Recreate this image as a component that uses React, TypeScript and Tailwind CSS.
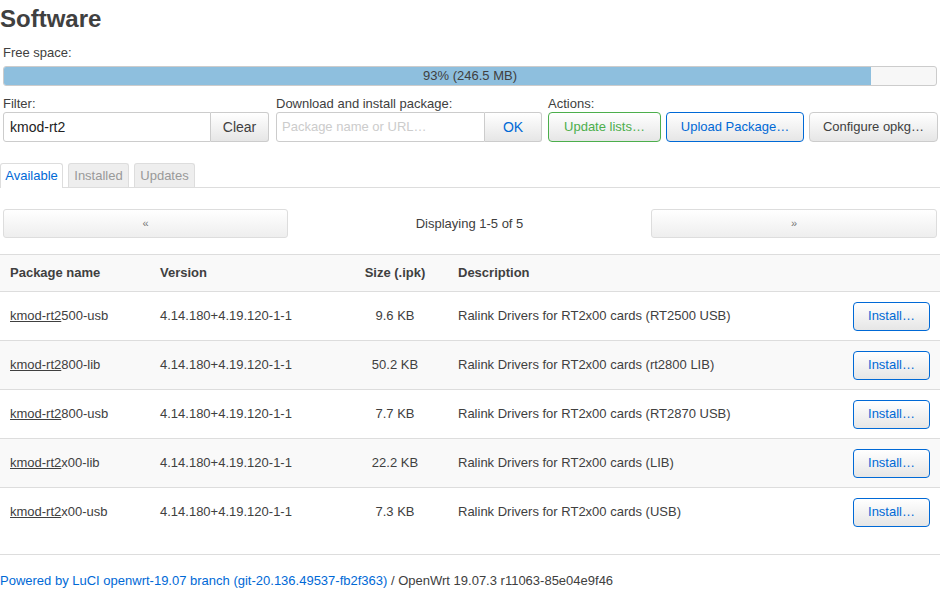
import React from "react";

const packages = [
  { rest: "500-usb", version: "4.14.180+4.19.120-1-1", size: "9.6 KB", desc: "Ralink Drivers for RT2x00 cards (RT2500 USB)" },
  { rest: "800-lib", version: "4.14.180+4.19.120-1-1", size: "50.2 KB", desc: "Ralink Drivers for RT2x00 cards (rt2800 LIB)" },
  { rest: "800-usb", version: "4.14.180+4.19.120-1-1", size: "7.7 KB", desc: "Ralink Drivers for RT2x00 cards (RT2870 USB)" },
  { rest: "x00-lib", version: "4.14.180+4.19.120-1-1", size: "22.2 KB", desc: "Ralink Drivers for RT2x00 cards (LIB)" },
  { rest: "x00-usb", version: "4.14.180+4.19.120-1-1", size: "7.3 KB", desc: "Ralink Drivers for RT2x00 cards (USB)" },
];

export default function App() {
  return (
    <div className="w-[940px] h-[590px] bg-white text-[#404040] text-[13px] font-['Liberation_Sans',Arial,sans-serif] overflow-hidden">
      {/* Title */}
      <h2 className="pt-[5px] h-[33px] text-[24px] leading-[28px] font-bold">Software</h2>

      {/* Free space */}
      <div className="mt-[11px] px-[3px]">
        <div className="leading-[18px]">Free space:</div>
        <div className="relative mt-[4px] h-[20px] border border-[#ccc] rounded-[3px] bg-[#f7f7f7] overflow-hidden">
          <div className="h-full bg-[#8ebfde]" style={{ width: "93%" }}></div>
          <div className="absolute inset-0 flex items-center justify-center text-[13px] text-[#404040]">
            93% (246.5 MB)
          </div>
        </div>
      </div>

      {/* Controls */}
      <div className="flex mt-[9px] px-[3px]">
        <div className="w-[266px]">
          <div className="leading-[17px]">Filter:</div>
          <div className="flex h-[30px]">
            <div className="w-[208px] border border-[#ccc] rounded-l-[3px] flex items-center px-[6px] text-[14px] text-[#222]">
              kmod-rt2
            </div>
            <button className="w-[58px] border border-l-0 border-[#ccc] rounded-r-[3px] bg-linear-to-b from-white to-[#e6e6e6] text-[14px] text-[#404040]">
              Clear
            </button>
          </div>
        </div>
        <div className="w-[266px] ml-[7px]">
          <div className="leading-[17px]">Download and install package:</div>
          <div className="flex h-[30px]">
            <div className="w-[209px] border border-[#ccc] rounded-l-[3px] flex items-center px-[5px] text-[13px] text-[#ccc]">
              Package name or URL…
            </div>
            <button className="w-[57px] border border-l-0 border-[#ccc] rounded-r-[3px] bg-linear-to-b from-white to-[#e6e6e6] text-[14px] text-[#0069d6]">
              OK
            </button>
          </div>
        </div>
        <div className="ml-[6px]">
          <div className="leading-[17px]">Actions:</div>
          <div className="flex h-[30px] gap-[5px]">
            <button className="w-[113px] border border-[#4cae4c] rounded-[4px] bg-linear-to-b from-white to-[#e6e6e6] text-[#4cae4c]">
              Update lists…
            </button>
            <button className="w-[138px] border border-[#0069d6] rounded-[4px] bg-linear-to-b from-white to-[#e6e6e6] text-[#0069d6]">
              Upload Package…
            </button>
            <button className="w-[129px] border border-[#ccc] rounded-[4px] bg-linear-to-b from-white to-[#e6e6e6] text-[#404040]">
              Configure opkg…
            </button>
          </div>
        </div>
      </div>

      {/* Tabs */}
      <div className="flex gap-[5px] mt-[21px] h-[25px] border-b border-[#ddd]">
        <div className="w-[63px] h-[25px] -mb-px border border-b-0 border-[#ddd] rounded-t-[3px] bg-white text-[#0069d6] flex items-center justify-center">
          Available
        </div>
        <div className="w-[61px] h-[24px] border border-b-0 border-[#ddd] rounded-t-[3px] bg-[#eee] text-[#999] flex items-center justify-center">
          Installed
        </div>
        <div className="w-[61px] h-[24px] border border-b-0 border-[#ddd] rounded-t-[3px] bg-[#eee] text-[#999] flex items-center justify-center">
          Updates
        </div>
      </div>

      {/* Pager */}
      <div className="flex items-center mt-[21px] px-[3px] h-[29px]">
        <button className="w-[285px] h-full border border-[#ddd] rounded-[3px] bg-linear-to-b from-white to-[#eee] text-[#777] text-[11px]">
          «
        </button>
        <div className="flex-1 text-center">Displaying 1-5 of 5</div>
        <button className="w-[286px] h-full border border-[#ddd] rounded-[3px] bg-linear-to-b from-white to-[#eee] text-[#777] text-[11px]">
          »
        </button>
      </div>

      {/* Table */}
      <div className="mt-[16px]">
        <div className="grid grid-cols-[150px_192px_106px_1fr_100px] h-[38px] items-center border-t border-b border-[#ddd] bg-[#f9f9f9] font-bold">
          <div className="pl-[10px]">Package name</div>
          <div className="pl-[10px]">Version</div>
          <div className="text-center">Size (.ipk)</div>
          <div className="pl-[10px]">Description</div>
          <div></div>
        </div>
        {packages.map((p, i) => (
          <div
            key={p.rest}
            className={`grid grid-cols-[150px_192px_106px_1fr_100px] items-center ${
              i < packages.length - 1 ? "h-[49px] border-b border-[#ddd]" : "h-[48px]"
            } ${i % 2 === 1 ? "bg-[#f9f9f9]" : "bg-white"}`}
          >
            <div className="pl-[10px]">
              <span className="underline">kmod-rt2</span>
              {p.rest}
            </div>
            <div className="pl-[10px]">{p.version}</div>
            <div className="text-center">{p.size}</div>
            <div className="pl-[10px]">{p.desc}</div>
            <div className="flex justify-end pr-[10px]">
              <button className="w-[77px] h-[29px] border border-[#0069d6] rounded-[4px] bg-linear-to-b from-white to-[#e6e6e6] text-[#0069d6]">
                Install…
              </button>
            </div>
          </div>
        ))}
      </div>

      {/* Footer */}
      <div className="mt-[18px] border-t border-[#ddd] pt-[18px] text-[13px] leading-[16px]">
        <a className="text-[#0069d6]">Powered by LuCI openwrt-19.07 branch (git-20.136.49537-fb2f363)</a>
        <span className="text-[#404040]"> / OpenWrt 19.07.3 r11063-85e04e9f46</span>
      </div>
    </div>
  );
}
